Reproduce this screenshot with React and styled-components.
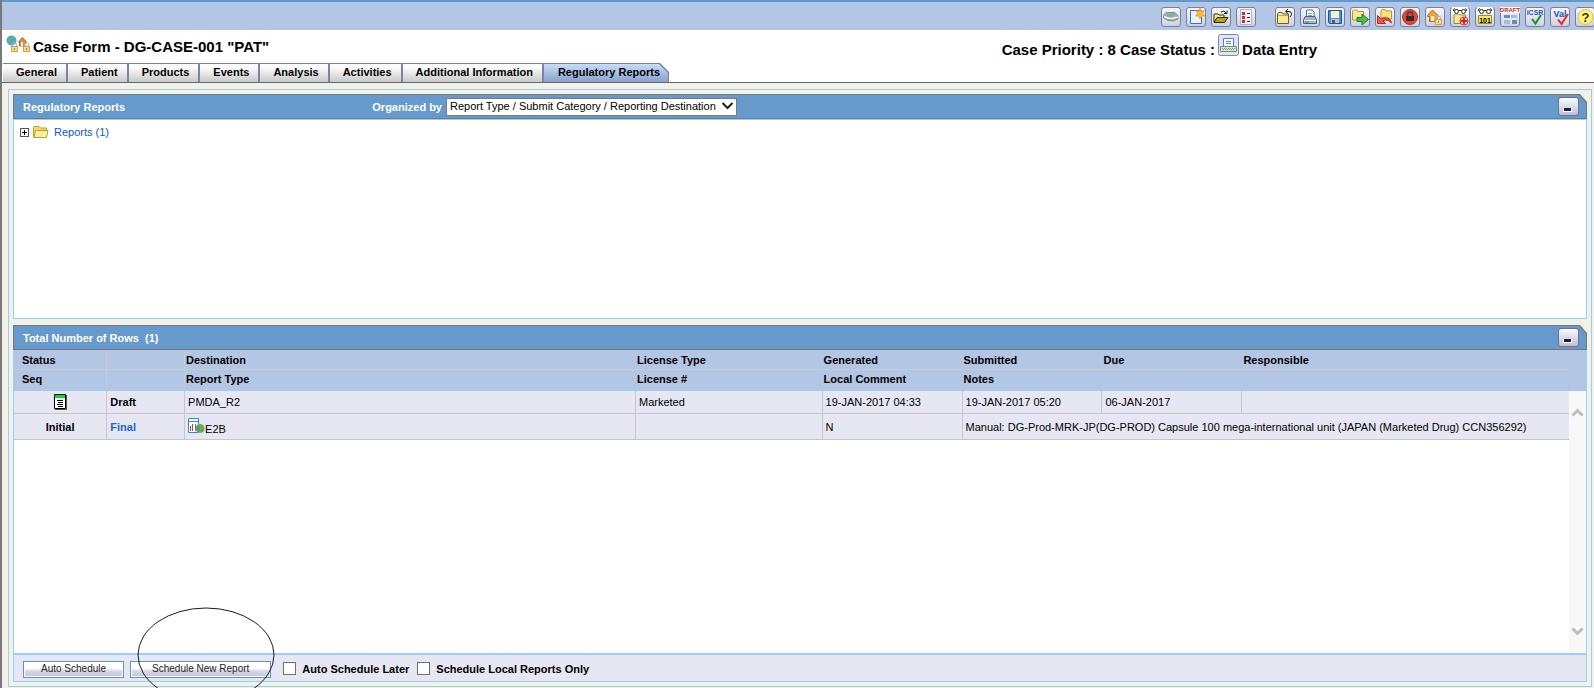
import React, {useState} from 'react';
import styled, {createGlobalStyle, css} from 'styled-components';

const GlobalStyle = createGlobalStyle`
    body {
        margin: 0;
        background: #fff;
        color: #000;
        font-family: "Liberation Sans", Arial, sans-serif;
        font-size: 11px;
    }

    *, *:before, *:after {
        box-sizing: border-box;
    }

    button, select, input {
        font-family: inherit;
    }
`;

const Page = styled.div`
    display: flex;
    flex-direction: column;
    min-height: 100vh;
    border-left: 2px solid #77777c;
    overflow: hidden;
    position: relative;
`;

const Toolbar = styled.div`
    display: flex;
    align-items: center;
    justify-content: flex-end;
    gap: 5px;
    height: 30px;
    padding-top: 2px;
    border-top: 2px solid #5f99cd;
    background: #b3c6e3;
    margin-right: -1px;
`;

const ToolButton = styled.button`
    flex: none;
    width: 20px;
    height: 20px;
    padding: 0;
    border: 1px solid #787e9a;
    border-radius: 3px;
    background: linear-gradient(#f6f7fc, #cdd1e2);
    cursor: pointer;
    ${({gap}) => gap && css`margin-left: 14px;`}

    svg {
        display: block;
        overflow: visible;
    }
`;

const TitleRow = styled.div`
    display: flex;
    align-items: center;
    height: 33px;
    padding-left: 4px;
    font-size: 15px;
    font-weight: 700;
`;

const Title = styled.h1`
    display: flex;
    align-items: center;
    gap: 2px;
    flex: 0 0 1000px;
    flex-basis: 62.7%;
    margin: 0;
    font-size: 15px;

    svg {
        margin-top: -5px;
    }
`;

const CaseState = styled.div`
    display: flex;
    align-items: center;
    gap: 3px;
    white-space: nowrap;
    padding-top: 5px;

    svg {
        margin-top: -9px;
    }
`;

const Tabs = styled.nav`
    display: flex;
    height: 20px;
    padding-left: 1px;
    border-bottom: 1px solid #66666e;
`;

const Tab = styled.button`
    height: 19px;
    padding: 0 9px 2px 13px;
    border: 0;
    border-top: 1px solid #74809c;
    border-right: 2px solid #7b86a5;
    background: linear-gradient(#fcfcfc 20%, #c8c8c8);
    font-size: 11px;
    font-weight: 700;
    color: #000;
    cursor: pointer;
    white-space: nowrap;
`;

const ActiveTab = styled.div`
    padding: 1px 1px 0 0;
    background: #74809c;
    clip-path: polygon(0 0, calc(100% - 9px) 0, 100% 9px, 100% 100%, 0 100%);

    button {
        height: 18px;
        padding: 0 8px 2px 14px;
        border: 0;
        background: linear-gradient(#c9dcf8, #89a2cd);
        clip-path: polygon(0 0, calc(100% - 9px) 0, 100% 9px, 100% 100%, 0 100%);
        font-size: 11px;
        font-weight: 700;
        color: #000;
        cursor: pointer;
    }
`;

const Content = styled.main`
    display: flex;
    flex-direction: column;
    flex: 1;
    padding: 6px 2px 1px 6px;
    background: #f1f1e6;
`;

const Frame = styled.div`
    display: flex;
    flex-direction: column;
    flex: 1;
    gap: 6px;
    padding: 4px;
    border: 1px solid #99ccff;
`;

const Panel = styled.section`
    display: flex;
    flex-direction: column;
    ${({grow}) => grow && css`flex: 1;`}
`;

const HeaderEdge = styled.header`
    padding: 1px;
    background: #77777f;
    clip-path: polygon(0 0, calc(100% - 7px) 0, 100% 8px, 100% 100%, 0 100%);
`;

const HeaderBar = styled.div`
    display: flex;
    align-items: center;
    height: 23px;
    padding: 0 7px 0 9px;
    background: #6699cc;
    clip-path: polygon(0 0, calc(100% - 7px) 0, 100% 8px, 100% 100%, 0 100%);
    color: #fff;
    font-weight: 700;
`;

const HeaderTitle = styled.h2`
    margin: 0;
    flex: 0 0 22%;
    font-size: 11px;
    white-space: pre;
`;

const Organize = styled.label`
    display: flex;
    align-items: center;
    gap: 4px;
    padding-left: 7px;
`;

const SelectBox = styled.span`
    display: inline-flex;
    position: relative;

    svg {
        position: absolute;
        right: 3px;
        top: 4px;
        pointer-events: none;
    }
`;

const Select = styled.select`
    appearance: none;
    height: 18px;
    padding: 0 20px 1px 3px;
    border: 1px solid #7a7a7a;
    border-radius: 0;
    background: #fff;
    color: #000;
    font-size: 11px;
`;

const Collapse = styled.button`
    width: 21px;
    height: 19px;
    margin-left: auto;
    padding: 7px 0 0 4px;
    border: 1px solid #74708c;
    border-radius: 3px;
    background: linear-gradient(#fafafd, #bfbfd6);
    cursor: pointer;

    &:before {
        content: "";
        display: block;
        width: 9px;
        height: 4px;
        border: solid #fff;
        border-width: 0 1px 1px;
        background: #1c1c40;
    }
`;

const PanelBody = styled.div`
    display: flex;
    flex-direction: column;
    flex: 1;
    border: 1px solid #99ccff;
    border-top-color: ${({plain}) => plain ? '#99ccff' : '#b3c6e3'};
    background: #fff;
`;

const Tree = styled.ul`
    min-height: 198px;
    margin: 0;
    padding: 4px 6px;
    list-style: none;

    li {
        display: flex;
        align-items: center;
        height: 16px;
    }

    a {
        margin-left: 5px;
        color: #0a5bc4;
        text-decoration: none;
    }
`;

const Expander = styled.button`
    display: flex;
    width: 9px;
    height: 9px;
    margin-right: 4px;
    padding: 0;
    border: 1px solid #555;
    background: #fff;
    cursor: pointer;
`;

const Grid = styled.div`
    display: flex;
    flex: 1;
`;

const TableArea = styled.div`
    flex: 1;
    min-width: 0;
`;

const Table = styled.table`
    width: 100%;
    table-layout: fixed;
    border-spacing: 0;

    th {
        height: 19px;
        padding: 0 0 0 1px;
        border: 0 solid #c6ccd6;
        border-bottom-width: 1px;
        background: #b3c6e3;
        text-align: left;
        white-space: nowrap;
    }

    th:first-child {
        padding-left: 8px;
    }

    th:nth-child(-n + 2) {
        border-right-width: 1px;
    }

    thead tr:last-child th {
        height: 21px;
        padding-bottom: 2px;
        border-bottom-color: #99ccff;
    }

    td {
        height: 23px;
        padding: 0 3px;
        border: 0 solid #c6c6cc;
        border-width: 0 1px 1px 0;
        background: #e7e7f3;
        white-space: nowrap;
    }

    td:last-child {
        border-right: 0;
    }

    tbody tr:last-child td {
        height: 26px;
    }

    td:first-child {
        text-align: center;
        font-weight: 700;
    }

    td:nth-child(2) {
        font-weight: 700;
    }

    td a {
        color: #1a66cc;
        text-decoration: none;
    }

    td svg {
        vertical-align: middle;
    }
`;

const ReportType = styled.span`
    display: flex;
    align-items: center;

    span {
        padding-top: 4px;
    }
`;

const ScrollColumn = styled.div`
    display: flex;
    flex-direction: column;
    width: 17px;
`;

const HeadCorner = styled.div`
    height: 40px;
    border-bottom: 1px solid #99ccff;
    background: #b3c6e3;
`;

const Rail = styled.div`
    display: flex;
    flex: 1;
    flex-direction: column;
    align-items: center;
    justify-content: space-between;
    padding: 17px 0;
    background: #f8f8f8;
`;

const Footer = styled.footer`
    display: flex;
    align-items: center;
    height: 28px;
    padding: 2px 9px 0;
    border-top: 2px solid #99ccff;
    background: #e7e7f3;
    font-weight: 700;
`;

const ActionButton = styled.button`
    height: 17px;
    padding: 0 21px 2px;
    border: 1px solid #5f93cb;
    background: linear-gradient(#fff 45%, #dcdcea 55%, #c2c2da);
    box-shadow: inset 0 0 0 1px #fff;
    color: #222;
    font-size: 10px;
    cursor: pointer;
    ${({narrow}) => narrow && css`padding: 0 17px 2px;`}
`;

const Marked = styled.span`
    display: inline-flex;
    position: relative;
    margin: 0 12px 0 6px;

    svg {
        position: absolute;
        left: 7px;
        top: -54px;
        pointer-events: none;
    }
`;

const Check = styled.label`
    display: flex;
    align-items: center;
    gap: 6px;
    margin-right: 8px;

    input {
        appearance: none;
        width: 13px;
        height: 13px;
        margin: 0 0 2px;
        border: 1px solid #707070;
        background: #fff;
    }

    input:checked {
        box-shadow: inset 0 0 0 2px #fff;
        background: #333;
    }
`;

const Icon = ({children, size = 18}) => (
    <svg width={size} height={size} viewBox="0 0 18 18" aria-hidden="true">{children}</svg>
);

const Glasses = () => (
    <g>
        <rect x="1" y="-1" width="16" height="7" fill="#fff"/>
        <path d="M2.500 3V1.500L4 .5M15.500 3V1.500L14 .5M8 2.500H10" fill="none" stroke="#222"/>
        <circle cx="5.500" cy="3.500" r="2" fill="#fff" stroke="#222"/>
        <circle cx="12.500" cy="3.500" r="2" fill="#fff" stroke="#222"/>
    </g>
);

const Folder = () => (
    <path d="M3 15.500V7L4 6H8L9 7H14.500V15.500Z" fill="#f5e896" stroke="#a08c28"/>
);

const Padlock = ({x, y}) => (
    <g transform={`translate(${x} ${y})`}>
        <path d="M1.500 4V2A2 2 0 0 1 5.500 2V4" fill="none" stroke="#b9b4a8" strokeWidth="1.200"/>
        <rect x=".5" y="3.500" width="6" height="5" fill="#f6dc94" stroke="#cfa24c"/>
        <path d="M3.500 5V7" stroke="#9c7a34"/>
    </g>
);

const tools = [
    {name: 'Scan', icon: <Icon>
        <path d="M1.500 7.500L4 4.500H13L16 8V11Q12 14 6 12.500L1.500 10Z" fill="#a6acac" stroke="#858b8c"/>
        <path d="M2 8.500Q8 12 16 9" fill="none" stroke="#f2f4f4" strokeWidth="1.500"/>
        <path d="M4 6.500L12 5.500L13.500 7.500Q9 9.500 5 8Z" fill="#79b59c"/>
    </Icon>},
    {name: 'New', icon: <Icon>
        <path d="M3.500 2.500H14.500V15.500H3.500Z" fill="#e8f3ff" stroke="#3974c0"/>
        <path d="M13 0L14.200 3.600L17.500 2.500L15.800 5.500L18 8L14.800 8L13 11L11.500 8L8.500 8L10.500 5.500L9 2.500L12 3.600Z" fill="#ffbd2e" stroke="#f08a10" strokeWidth=".6"/>
    </Icon>},
    {name: 'Open', icon: <Icon>
        <path d="M2 14V6H6L7 7H12V9" fill="#f8ef78" stroke="#3a3200"/>
        <path d="M2 14.500L5 9.500H16L12.500 14.500Z" fill="#b5a425" stroke="#2e2800"/>
        <path d="M9 4Q12 1.500 14.500 5M15 2.500V5.500H12" fill="none" stroke="#222"/>
    </Icon>},
    {name: 'List', icon: <Icon>
        <path d="M3.500 1.500H14.500V16.500H3.500Z" fill="#f4f4fb" stroke="#b2b2d0"/>
        <path d="M5 4H8V7H5ZM5 8H8V11H5ZM5 12H8V15H5Z" fill="#d8292f"/>
        <path d="M10 5.500H13M10 9.500H13M10 13.500H13" stroke="#333"/>
    </Icon>},
    {name: 'Close', gap: true, icon: <Icon>
        <path d="M1.500 15.500V6L2.500 4.500H6L7 6H12.500V15.500Z" fill="#f5eb8e" stroke="#6e601c"/>
        <path d="M2 7.500H12" stroke="#c5b04a"/>
        <path d="M10 3.500H13Q16 3.500 15.500 6.500Q15 8 14 9M12 1L9.500 3.500L12 5.500" fill="none" stroke="#222"/>
    </Icon>},
    {name: 'Print', icon: <Icon>
        <path d="M5.500 9V2H11L13 4V9" fill="#fff" stroke="#4177af"/>
        <path d="M7 5.500H11M7 7.500H11" stroke="#72a1cf"/>
        <path d="M4 8.500L2.500 12V15.500H15.500V12L14 8.500Z" fill="#a2b5c9" stroke="#49637f"/>
        <path d="M3 12.500H15" stroke="#e8f0fa"/>
        <path d="M4 14H8" stroke="#53779e"/>
    </Icon>},
    {name: 'Save', icon: <Icon>
        <path d="M2.500 2.500H15.500V15.500H3.500L2.500 14.500Z" fill="#4a93d8" stroke="#23558e"/>
        <path d="M5 3H13V10H5Z" fill="#f8f1c0"/>
        <path d="M5 11H13V15H5Z" fill="#b9c8d8"/>
        <path d="M6 12H9V15H6Z" fill="#335f91"/>
    </Icon>},
    {name: 'Forward', icon: <Icon>
        <path d="M1.500 12V3L2.500 2H6L7 3.500H12.500V12Z" fill="#f9e893" stroke="#b49832"/>
        <path d="M6 9.500H11V6L17.500 11.500L11 17V13.500H6Z" fill="#4fbd4b" stroke="#1e7d29"/>
    </Icon>},
    {name: 'Return', icon: <Icon>
        <path d="M5 10V3L6 1.500H9L10 3H15.500V11Z" fill="#f9e481" stroke="#b49832"/>
        <path d="M1.500 7.500V15.500H9.500L7 12.800Q11 10.500 15.500 15Q14 7.500 4.500 10.500Z" fill="#f05747" stroke="#b82820"/>
    </Icon>},
    {name: 'Lock', icon: <Icon>
        <circle cx="9" cy="9" r="7.500" fill="#e64638" stroke="#c0302a"/>
        <path d="M6.500 8V6.500A2.500 2.500 0 0 1 11.500 6.500V8" fill="none" stroke="#444" strokeWidth="1.500"/>
        <rect x="5" y="8" width="8" height="5" fill="#2e2e2e"/>
    </Icon>},
    {name: 'Local lock', icon: <Icon>
        <path d="M1.500 7.500L6.500 2L12 7.500V8.500H11V13.500H3.500V8.500H1.500Z" fill="#f2a23c" stroke="#b66818"/>
        <path d="M5 8H8V13H5Z" fill="#fff3dd"/>
        <Padlock x={9} y={8}/>
    </Icon>},
    {name: 'Medical review', icon: <Icon>
        <Folder/>
        <Glasses/>
        <circle cx="13" cy="13" r="4" fill="#fff" stroke="#e81818"/>
        <path d="M13 10V16M10 13H16" stroke="#e81818" strokeWidth="2"/>
    </Icon>},
    {name: 'Coding review', icon: <Icon>
        <path d="M2.500 15.500V7.500H15.500V15.500Z" fill="#f5ea65" stroke="#a08c28"/>
        <Glasses/>
        <text x="9" y="15" textAnchor="middle" fontSize="7" fontWeight="700">101</text>
    </Icon>},
    {name: 'Draft', icon: <Icon>
        <path d="M2 6H16V16H2Z" fill="#dde7f2"/>
        <path d="M3 7H9V10H3ZM11 12H16V16H11Z" fill="#6d8bad"/>
        <path d="M10 7H16V10H10ZM3 12H9V16H3Z" fill="#a8bdd5"/>
        <path d="M-1 -1H19V5H-1Z" fill="#fff"/>
        <text x="9" y="4" textAnchor="middle" fontSize="6" fontWeight="700" fill="#e81414">DRAFT</text>
    </Icon>},
    {name: 'ICSR validation', icon: <Icon>
        <text x="9" y="7" textAnchor="middle" fontSize="7" fontWeight="700" fill="#2058b4">ICSR</text>
        <path d="M6 11L9.500 15.500L15 7" fill="none" stroke="#159326" strokeWidth="2"/>
    </Icon>},
    {name: 'Validate', icon: <Icon>
        <text x="9" y="9" textAnchor="middle" fontSize="9" fontWeight="700" fill="#2058b4">Val</text>
        <path d="M7 11.500L10.500 16L17 6" fill="none" stroke="#f02828" strokeWidth="2"/>
    </Icon>},
    {name: 'Help', icon: <Icon>
        <circle cx="9.500" cy="9" r="7.500" fill="#fff37b" stroke="#d9c14a"/>
        <text x="9.500" y="13.500" textAnchor="middle" fontSize="13" fontWeight="700" fill="#333">?</text>
    </Icon>}
];

const CaseIcon = () => (
    <svg width="25" height="18" viewBox="0 0 25 18" aria-hidden="true">
        <circle cx="5.500" cy="5.500" r="5" fill="#4aa6e4"/>
        <path d="M2 2Q5 1 6 3L4 6L1 7Q0 4 2 2ZM7 5L10 4L9 8Z" fill="#63bd4c"/>
        <path d="M12.500 7L16.500 2.500L20.500 7L19 8V11H13.500V7Z" fill="#e98b30" stroke="#8e501b" strokeWidth=".8"/>
        <path d="M15 7H17V11H15Z" fill="#fff"/>
        <Padlock x={5} y={8}/>
        <Padlock x={17} y={8}/>
    </svg>
);

const DataEntryIcon = () => (
    <svg width="21" height="22" viewBox="0 0 21 22" aria-hidden="true">
        <rect x=".5" y=".5" width="20" height="21" rx="2" fill="#dfe4f0" stroke="#7e88a5"/>
        <path d="M5.500 12V4.500H15.500V12" fill="#fff" stroke="#4b83c8"/>
        <path d="M8 7.500H13M8 9.500H13" stroke="#4b83c8"/>
        <path d="M2.500 12.500H18.500V17.500H2.500Z" fill="#d7e8d5" stroke="#6d9278"/>
        <path d="M4 14.500H17M5 15.500H17" stroke="#729b7c" strokeDasharray="1 1"/>
    </svg>
);

const FolderIcon = () => (
    <svg width="16" height="14" viewBox="0 0 16 14" aria-hidden="true">
        <path d="M.5 12.500V2L1.500 1.500H6L7.500 3H13.500V5" fill="#f7d968" stroke="#c09a34"/>
        <path d="M1 12.500L2.500 5.500H15L13.500 12.500Z" fill="#fff0a4" stroke="#c79b2a"/>
    </svg>
);

const StatusIcon = () => (
    <svg width="13" height="16" viewBox="0 0 13 16" aria-label="Draft report">
        <path d="M.5 .5H11.500V14.500H.5Z" fill="#fff" stroke="#000"/>
        <path d="M12.500 1V15.500H1" fill="none" stroke="#555"/>
        <path d="M1 1H11V4H1Z" fill="#0be01c"/>
        <path d="M3 6.500H9M4 8.500H9M3 10.500H9M4 12.500H9" stroke="#000"/>
    </svg>
);

const ReportIcon = () => (
    <svg width="17" height="17" viewBox="0 0 17 17" aria-hidden="true">
        <path d="M.5 14.500V.5H10.500V14.500Z" fill="#fff" stroke="#2b8ade"/>
        <path d="M1 3.500H10" stroke="#2b8ade"/>
        <path d="M2.500 13V8M4.500 13V6" stroke="#e33a2c"/>
        <path d="M7.500 13V6" stroke="#3a87d2"/>
        <circle cx="12" cy="10.500" r="4.500" fill="#7aae34"/>
        <path d="M8 10L11 8L12 11L10 14ZM13 12L16 11L14 14Z" fill="#3a94c9"/>
    </svg>
);

const Chevron = ({down}) => (
    <svg width="13" height="9" viewBox="0 0 13 9" aria-hidden="true">
        <path d={down ? 'M1.500 1.500L6.500 6.500L11.500 1.500' : 'M1.500 7.500L6.500 2.500L11.500 7.500'}
            fill="none" stroke="#bdbdbd" strokeWidth="3"/>
    </svg>
);

const PanelHeader = ({title, children}) => (
    <HeaderEdge>
        <HeaderBar>
            <HeaderTitle>{title}</HeaderTitle>
            {children}
            <Collapse aria-label={`Collapse ${title}`}/>
        </HeaderBar>
    </HeaderEdge>
);

const tabs = ['General', 'Patient', 'Products', 'Events', 'Analysis', 'Activities', 'Additional Information'];
const columns = ['6%', '5%', '29%', '12%', '9%', '9%', '9%', '21%'];
const headings = [
    ['Status', '', 'Destination', 'License Type', 'Generated', 'Submitted', 'Due', 'Responsible'],
    ['Seq', '', 'Report Type', 'License #', 'Local Comment', 'Notes', '', '']
];

const App = () => {
    const [later, setLater] = useState(false);
    const [localOnly, setLocalOnly] = useState(false);

    return (
        <Page>
            <GlobalStyle/>
            <Toolbar>
                {tools.map(({name, gap, icon}) => (
                    <ToolButton key={name} gap={gap ? 1 : undefined} aria-label={name}>{icon}</ToolButton>
                ))}
            </Toolbar>
            <TitleRow>
                <Title><CaseIcon/>Case Form - DG-CASE-001 "PAT"</Title>
                <CaseState>Case Priority : 8 Case Status : <DataEntryIcon/>Data Entry</CaseState>
            </TitleRow>
            <Tabs>
                {tabs.map(tab => <Tab key={tab}>{tab}</Tab>)}
                <ActiveTab><button>Regulatory Reports</button></ActiveTab>
            </Tabs>
            <Content>
                <Frame>
                    <Panel>
                        <PanelHeader title="Regulatory Reports">
                            <Organize>
                                Organized by
                                <SelectBox>
                                    <Select>
                                        <option>Report Type / Submit Category / Reporting Destination</option>
                                    </Select>
                                    <svg width="13" height="8" viewBox="0 0 13 8">
                                        <path d="M1.500 1L6.500 6L11.500 1" fill="none" stroke="#222" strokeWidth="2"/>
                                    </svg>
                                </SelectBox>
                            </Organize>
                        </PanelHeader>
                        <PanelBody plain={1}>
                            <Tree>
                                <li>
                                    <Expander aria-label="Expand Reports">
                                        <svg width="7" height="7" viewBox="0 0 7 7">
                                            <path d="M1 3.500H6M3.500 1V6" stroke="#000"/>
                                        </svg>
                                    </Expander>
                                    <FolderIcon/>
                                    <a href="#reports">Reports (1)</a>
                                </li>
                            </Tree>
                        </PanelBody>
                    </Panel>
                    <Panel grow={1}>
                        <PanelHeader title="Total Number of Rows  (1)"/>
                        <PanelBody>
                            <Grid>
                                <TableArea>
                                    <Table>
                                        <colgroup>
                                            {columns.map((width, i) => <col key={i} width={width}/>)}
                                        </colgroup>
                                        <thead>
                                            {headings.map((row, i) => (
                                                <tr key={i}>
                                                    {row.map((text, j) => <th key={j}>{text}</th>)}
                                                </tr>
                                            ))}
                                        </thead>
                                        <tbody>
                                            <tr>
                                                <td><StatusIcon/></td>
                                                <td>Draft</td>
                                                <td>PMDA_R2</td>
                                                <td>Marketed</td>
                                                <td>19-JAN-2017 04:33</td>
                                                <td>19-JAN-2017 05:20</td>
                                                <td>06-JAN-2017</td>
                                                <td/>
                                            </tr>
                                            <tr>
                                                <td>Initial</td>
                                                <td><a href="#final">Final</a></td>
                                                <td><ReportType><ReportIcon/><span>E2B</span></ReportType></td>
                                                <td/>
                                                <td>N</td>
                                                <td colSpan={3}>
                                                    Manual: DG-Prod-MRK-JP(DG-PROD) Capsule 100 mega-international unit (JAPAN (Marketed Drug) CCN356292)
                                                </td>
                                            </tr>
                                        </tbody>
                                    </Table>
                                </TableArea>
                                <ScrollColumn>
                                    <HeadCorner/>
                                    <Rail><Chevron/><Chevron down/></Rail>
                                </ScrollColumn>
                            </Grid>
                            <Footer>
                                <ActionButton narrow={1}>Auto Schedule</ActionButton>
                                <Marked>
                                    <ActionButton>Schedule New Report</ActionButton>
                                    <svg width="138" height="96" viewBox="0 0 138 96" aria-hidden="true">
                                        <ellipse cx="69" cy="48" rx="68" ry="47" fill="none" stroke="#1a1a2a"/>
                                    </svg>
                                </Marked>
                                <Check>
                                    <input type="checkbox" checked={later} onChange={e => setLater(e.target.checked)}/>
                                    Auto Schedule Later
                                </Check>
                                <Check>
                                    <input type="checkbox" checked={localOnly} onChange={e => setLocalOnly(e.target.checked)}/>
                                    Schedule Local Reports Only
                                </Check>
                            </Footer>
                        </PanelBody>
                    </Panel>
                </Frame>
            </Content>
        </Page>
    );
};

export default App;
